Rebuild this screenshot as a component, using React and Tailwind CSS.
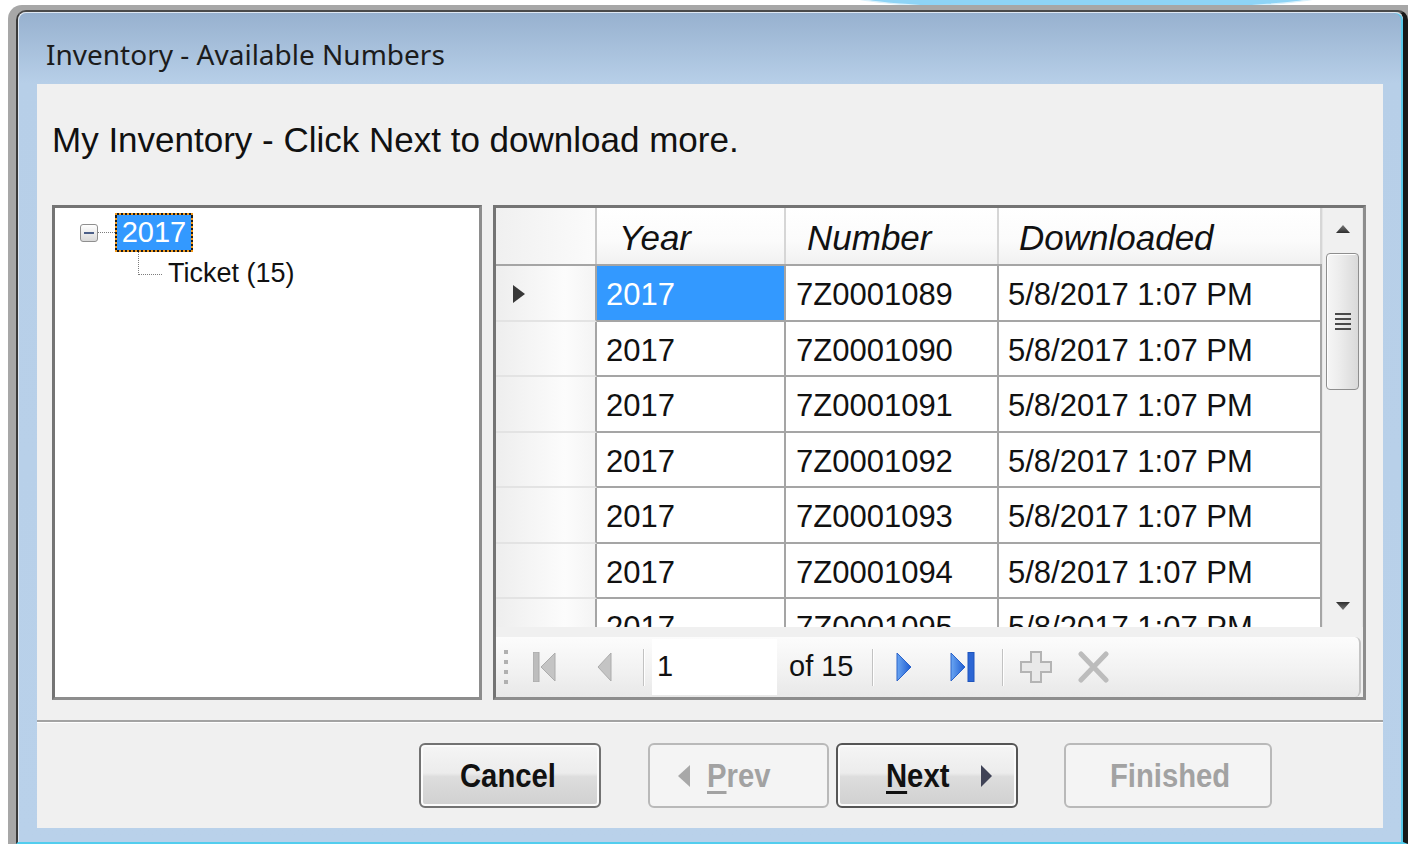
import React from 'react';

const numbers = [
  '7Z0001089',
  '7Z0001090',
  '7Z0001091',
  '7Z0001092',
  '7Z0001093',
  '7Z0001094',
  '7Z0001095',
];

// small scrollbar arrow
const ScrollArrow = ({ up }) => (
  <svg width="14" height="8" viewBox="0 0 14 8">
    <defs>
      <linearGradient id={up ? 'sau' : 'sad'} x1="0" y1="0" x2="0" y2="1">
        <stop offset="0" stopColor={up ? '#7a7a7a' : '#2e2e2e'} />
        <stop offset="1" stopColor={up ? '#2e2e2e' : '#7a7a7a'} />
      </linearGradient>
    </defs>
    <polygon
      points={up ? '7,0 14,8 0,8' : '0,0 14,0 7,8'}
      fill={`url(#${up ? 'sau' : 'sad'})`}
    />
  </svg>
);

const NavFirst = () => (
  <svg width="23" height="30" viewBox="0 0 23 30">
    <rect x="0" y="0" width="6" height="30" fill="#bdbdbd" stroke="#a9a9a9" />
    <polygon points="22,1 22,29 8,15" fill="#c4c4c4" stroke="#acacac" />
  </svg>
);

const NavPrev = () => (
  <svg width="15" height="30" viewBox="0 0 15 30">
    <polygon points="14,1 14,29 1,15" fill="#c4c4c4" stroke="#acacac" />
  </svg>
);

const NavNext = () => (
  <svg width="16" height="30" viewBox="0 0 16 30">
    <defs>
      <linearGradient id="nvn" x1="0" y1="0" x2="1" y2="0">
        <stop offset="0" stopColor="#6aa6f2" />
        <stop offset="1" stopColor="#1d5bd1" />
      </linearGradient>
    </defs>
    <polygon points="1,1 1,29 15,15" fill="url(#nvn)" stroke="#2a62c9" />
  </svg>
);

const NavLast = () => (
  <svg width="25" height="30" viewBox="0 0 25 30">
    <defs>
      <linearGradient id="nvl" x1="0" y1="0" x2="1" y2="0">
        <stop offset="0" stopColor="#6aa6f2" />
        <stop offset="1" stopColor="#1d5bd1" />
      </linearGradient>
    </defs>
    <polygon points="1,1 1,29 15,15" fill="url(#nvl)" stroke="#2a62c9" />
    <rect x="18" y="0.5" width="6" height="29" fill="#2c66d4" stroke="#1f55bd" />
  </svg>
);

const NavAdd = () => (
  <svg width="32" height="32" viewBox="0 0 32 32">
    <polygon
      points="11,1 21,1 21,11 31,11 31,21 21,21 21,31 11,31 11,21 1,21 1,11 11,11"
      fill="#e9e9e9"
      stroke="#b4b4b4"
      strokeWidth="2"
    />
  </svg>
);

const NavDelete = () => (
  <svg width="31" height="32" viewBox="0 0 31 32">
    <path d="M3 3 L28 29 M28 3 L3 29" stroke="#bcbcbc" strokeWidth="5" strokeLinecap="round" />
  </svg>
);

const ToolSep = () => <div className="w-[2px] h-[37px] bg-[#c2c2c2] border-r border-white" />;

const WinButton = ({ children, disabled, dark, className }) => (
  <div
    className={
      (disabled
        ? 'border-2 border-[#b9b9b9] bg-[#f4f4f4] text-[#a2a2a2] '
        : (dark ? 'border-2 border-[#555555] ' : 'border-2 border-[#727272] ') +
          'bg-[linear-gradient(to_bottom,#f5f5f5_0%,#ececec_46%,#dddddd_52%,#d0d0d0_100%)] shadow-[inset_0_0_0_2px_#fbfbfb] text-[#111111] ') +
      'h-[65px] rounded-[6px] flex items-center font-bold text-[34px] ' +
      className
    }
  >
    {children}
  </div>
);

// condensed caption text, as the classic bold dialog font renders
const Narrow = ({ children, className = '' }) => (
  <span className={'inline-block scale-x-[0.86] origin-left ' + className}>{children}</span>
);

export default function App() {
  return (
    <div className="w-[1408px] h-[844px] bg-white overflow-hidden relative font-['Liberation_Sans',Arial,sans-serif]">
      {/* desktop gadget peeking out behind the window */}
      <div className="absolute left-[828px] top-[-34px] w-[516px] h-[46px] rounded-[50%] bg-[#8ed4f6] border-2 border-[#d9f1fc]" />

      <div className="relative ml-[8px] mt-[5px] w-[1400px] h-[839px] bg-[#a7a7a7] rounded-tl-[14px] pt-[5px] pl-[8px]">
        <div className="h-[834px] rounded-t-[10px] border-l-2 border-t-2 border-r-[5px] border-b-2 border-l-[#3a3a3a] border-t-[#4a4a4a] border-r-[#181818] border-b-[#52cdee]">
          <div className="h-full rounded-t-[8px] border-l border-t border-[#dfe8f3] shadow-[inset_-2px_0_0_#58c9ea] bg-[linear-gradient(to_bottom,#97b1cf_0px,#b7cfe8_70px,#b9d1ea_100%)]">
            {/* caption */}
            <div className="h-[71px] pt-[22px] pl-[27px] font-['Noto_Sans',sans-serif] text-[28px] leading-[38px] text-[#1c1c1c]">
              Inventory - Available Numbers
            </div>

            {/* client area */}
            <div className="ml-[18px] w-[1346px] h-[744px] bg-[#f0f0f0] flex flex-col">
              <div className="pt-[36px] pl-[15px] text-[35px] leading-[40px] text-[#111111]">
                My Inventory - Click Next to download more.
              </div>

              <div className="mt-[45px] pl-[15px] flex gap-[11px] h-[495px]">
                {/* tree */}
                <div className="w-[430px] h-full border-[3px] border-[#8d8d8d] border-t-[#747474] border-l-[#747474] bg-white">
                  <div className="flex items-center pl-[25px] mt-[5px] h-[39px]">
                    <div className="w-[18px] h-[18px] rounded-[3px] border border-[#8f8f8f] bg-[linear-gradient(to_bottom,#ffffff,#d9d9d9)] flex items-center justify-center">
                      <div className="w-[10px] h-[2px] bg-[#4b5f88]" />
                    </div>
                    <div className="w-[17px] border-t border-dotted border-[#7d7d7d]" />
                    <div className="bg-[#1a1a1a]">
                      <div className="w-[78px] h-[39px] border-2 border-dotted border-[#f39a1c] bg-[#3399ff] bg-clip-padding text-white text-[29px] leading-[35px] flex items-center justify-center">
                        2017
                      </div>
                    </div>
                  </div>
                  <div className="flex items-start pl-[83px]">
                    <div className="w-[24px] h-[23px] border-l border-b border-dotted border-[#7d7d7d]" />
                    <div className="ml-[6px] mt-[7px] text-[27px] leading-[28px] text-[#111111]">Ticket (15)</div>
                  </div>
                </div>

                {/* data grid with navigator */}
                <div className="w-[873px] h-full border-[3px] border-[#8d8d8d] border-t-[#747474] border-l-[#747474] bg-[#f0f0f0] flex flex-col">
                  <div className="flex h-[419px]">
                    <div className="w-[826px] h-full overflow-hidden bg-white flex flex-col">
                      <div className="flex h-[58px] shrink-0 border-b-2 border-[#a5a5a5] bg-[linear-gradient(to_bottom,#ffffff_0%,#fbfbfb_60%,#f1f1f1_100%)] italic text-[35px] text-[#111111]">
                        <div className="w-[101px] border-r-2 border-[#c9c9c9] bg-[linear-gradient(to_right,#f0f0f0,#fbfbfb)]" />
                        <div className="w-[189px] border-r-2 border-[#d6d6d6] pl-[22px] pt-[4px] flex items-center">Year</div>
                        <div className="w-[213px] border-r-2 border-[#d6d6d6] pl-[21px] pt-[4px] flex items-center">Number</div>
                        <div className="w-[323px] border-r-2 border-[#d6d6d6] pl-[20px] pt-[4px] flex items-center">Downloaded</div>
                      </div>
                      {numbers.map((num, index) => (
                        <div key={num} className="flex h-[55.5px] shrink-0 text-[31px] text-[#111111]">
                          <div className="w-[101px] border-r-2 border-r-[#a5a5a5] border-b-2 border-b-[#e3e3e3] bg-[linear-gradient(to_right,#eeeeee,#fcfcfc_70%,#f4f4f4)] flex items-center pl-[17px] pt-[2px]">
                            {index === 0 && (
                              <svg width="12" height="18" viewBox="0 0 12 18">
                                <polygon points="0,0 12,9 0,18" fill="#383838" />
                              </svg>
                            )}
                          </div>
                          <div
                            className={
                              index === 0
                                ? 'w-[189px] border-r-2 border-b-2 border-[#a5a5a5] pl-[9px] pt-[5px] flex items-center bg-[#3399ff] text-white'
                                : 'w-[189px] border-r-2 border-b-2 border-[#a5a5a5] pl-[9px] pt-[5px] flex items-center'
                            }
                          >
                            2017
                          </div>
                          <div className="w-[213px] border-r-2 border-b-2 border-[#a5a5a5] pl-[10px] pt-[5px] flex items-center">{num}</div>
                          <div className="w-[323px] border-r-2 border-b-2 border-[#a5a5a5] pl-[9px] pt-[5px] flex items-center">5/8/2017 1:07 PM</div>
                        </div>
                      ))}
                    </div>

                    {/* vertical scrollbar */}
                    <div className="w-[41px] h-full bg-[#f0f0f0] border-l border-r border-[#e6e6e6] flex flex-col px-[3px]">
                      <div className="h-[42px] shrink-0 flex items-center justify-center">
                        <ScrollArrow up />
                      </div>
                      <div className="mt-[3px] h-[137px] rounded-[4px] border border-[#8e8e8e] bg-[linear-gradient(to_right,#f6f6f6,#ebebeb_45%,#d9d9d9_100%)] shadow-[inset_1px_1px_0_#ffffff] flex flex-col items-center justify-center gap-[3px]">
                        <div className="w-[16px] h-[2px] bg-[#4a4a4a]" />
                        <div className="w-[16px] h-[2px] bg-[#4a4a4a]" />
                        <div className="w-[16px] h-[2px] bg-[#4a4a4a]" />
                        <div className="w-[16px] h-[2px] bg-[#4a4a4a]" />
                      </div>
                      <div className="flex-1" />
                      <div className="h-[42px] shrink-0 flex items-center justify-center">
                        <ScrollArrow />
                      </div>
                    </div>
                  </div>

                  {/* binding navigator */}
                  <div className="h-[70px] pt-[10px] pr-[2px]">
                    <div className="h-full rounded-r-[6px] border-r-2 border-[#c4c4c4] bg-[linear-gradient(to_bottom,#fcfcfc,#f3f3f3_50%,#e8e8e8)] flex items-center text-[29px] text-[#111111]">
                      <div className="ml-[8px] w-[4px] flex flex-col gap-[6px]">
                        <div className="w-[4px] h-[4px] bg-[#b0b0b0]" />
                        <div className="w-[4px] h-[4px] bg-[#b0b0b0]" />
                        <div className="w-[4px] h-[4px] bg-[#b0b0b0]" />
                        <div className="w-[4px] h-[4px] bg-[#b0b0b0]" />
                      </div>
                      <div className="ml-[25px]"><NavFirst /></div>
                      <div className="ml-[41px]"><NavPrev /></div>
                      <div className="ml-[31px]"><ToolSep /></div>
                      <div className="ml-[7px] w-[125px] h-[56px] bg-white flex items-center pl-[5px]">1</div>
                      <div className="ml-[12px] w-[83px]">of 15</div>
                      <ToolSep />
                      <div className="ml-[22px]"><NavNext /></div>
                      <div className="ml-[38px]"><NavLast /></div>
                      <div className="ml-[27px]"><ToolSep /></div>
                      <div className="ml-[16px]"><NavAdd /></div>
                      <div className="ml-[26px]"><NavDelete /></div>
                    </div>
                  </div>
                </div>
              </div>

              {/* etched separator */}
              <div className="mt-[20px] h-[2px] bg-[#a3a3a3]" />
              <div className="h-[1px] bg-white" />

              {/* wizard buttons */}
              <div className="mt-[20px] flex">
                <WinButton className="ml-[382px] w-[182px] pl-[39px]">
                  <Narrow>Cancel</Narrow>
                </WinButton>
                <WinButton disabled className="ml-[47px] w-[181px] pl-[28px]">
                  <svg width="12" height="22" viewBox="0 0 12 22">
                    <polygon points="12,0 12,22 0,11" fill="#a8a8a8" />
                  </svg>
                  <Narrow className="ml-[17px]">
                    <span className="underline underline-offset-[4px]">P</span>rev
                  </Narrow>
                </WinButton>
                <WinButton dark className="ml-[7px] w-[182px] pl-[48px]">
                  <Narrow>
                    <span className="underline underline-offset-[4px]">N</span>ext
                  </Narrow>
                  <svg className="ml-[21px]" width="11" height="22" viewBox="0 0 11 22">
                    <polygon points="0,0 11,11 0,22" fill="#3f4256" />
                  </svg>
                </WinButton>
                <WinButton disabled className="ml-[46px] w-[208px] pl-[44px]">
                  <Narrow>Finished</Narrow>
                </WinButton>
              </div>
            </div>
          </div>
        </div>
      </div>
    </div>
  );
}
